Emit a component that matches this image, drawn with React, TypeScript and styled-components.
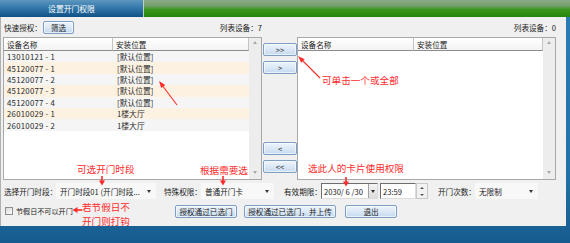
import React from "react";
import styled, { createGlobalStyle } from "styled-components";

const UI_FONT = `"Noto Sans CJK SC", "Noto Sans", sans-serif`;

const GlobalStyle = createGlobalStyle`
  html, body { margin: 0; padding: 0; }
  body { width: 570px; height: 243px; overflow: hidden; font-family: ${UI_FONT}; }
`;

const Screen = styled.div`
  position: relative;
  width: 570px;
  height: 243px;
  background: linear-gradient(#2a7db5 0%, #2272a8 70%, #175c8f 100%);
  font-family: ${UI_FONT};
  font-size: 7.6px;
  color: #222;
  overflow: hidden;
`;

const TitleBar = styled.div`
  display: flex;
  height: 17px;
`;

const Tab = styled.div`
  width: 143px;
  display: flex;
  align-items: center;
  justify-content: center;
  color: #fff;
  font-size: 7.8px;
  background: linear-gradient(#5d97bf 0%, #3479ab 45%, #0f5186 100%);
  border-right: 1px solid #b9d3b5;
`;

const TitleFill = styled.div`
  flex: 1;
  background: linear-gradient(#8cab88 0%, #739e6c 35%, #3c971e 55%, #26850f 100%);
`;

const Window = styled.div`
  width: 566px;
  height: 209px;
  box-sizing: border-box;
  background: #f0f0f0;
  border-left: 1px solid #b0b0b0;
  padding: 0 10px 0 2px;
  display: flex;
  flex-direction: column;
`;

const Main = styled.div`
  display: grid;
  grid-template-columns: 259px 35px 259px;
  grid-template-rows: 20px 143px;
`;

const TopCell = styled.div`
  display: flex;
  align-items: center;
  justify-content: space-between;
  padding: 0 0 0 1px;
`;

const Group = styled.div`
  display: flex;
  align-items: center;
`;

const Label = styled.span<{ $w?: number; $ml?: number; $size?: number }>`
  white-space: nowrap;
  ${(p) => (p.$w ? `width: ${p.$w}px; flex: none;` : "")}
  ${(p) => (p.$ml ? `margin-left: ${p.$ml}px;` : "")}
  ${(p) => (p.$size ? `font-size: ${p.$size}px;` : "")}
`;

const Btn = styled.div<{ $w: number; $ml?: number }>`
  width: ${(p) => p.$w}px;
  height: 13px;
  margin-left: ${(p) => p.$ml ?? 0}px;
  box-sizing: border-box;
  border: 1px solid #7e9ec4;
  border-radius: 2px;
  background: linear-gradient(#edf4fc 0%, #dbe8f6 50%, #c5d9ef 100%);
  box-shadow: inset 0 0 0 1px rgba(255, 255, 255, 0.6);
  display: flex;
  align-items: center;
  justify-content: center;
  white-space: nowrap;
  color: #222;
  flex: none;
`;

const ListBox = styled.div`
  display: grid;
  grid-template-columns: 1fr 12px;
  background: #fff;
  border: 1px solid #a8a8a8;
  min-height: 0;
`;

const ListBody = styled.div`
  display: flex;
  flex-direction: column;
  overflow: hidden;
`;

const HeaderRow = styled.div<{ $first: number }>`
  display: grid;
  grid-template-columns: ${(p) => p.$first}px 1fr;
  height: 13px;
  flex: none;
`;

const HeaderCell = styled.div`
  display: flex;
  align-items: center;
  padding-left: 3px;
  background: linear-gradient(#ffffff, #f3f3f3);
  border-right: 1px solid #c4c4c4;
  border-bottom: 1px solid #8c8c8c;
  box-sizing: border-box;
`;

const Row = styled.div<{ $alt: boolean }>`
  display: grid;
  grid-template-columns: 109px 1fr;
  height: 11.4px;
  flex: none;
  align-items: center;
  background: ${(p) => (p.$alt ? "#fdf2e1" : "#f5f5f5")};
  font-size: 7.8px;
  color: #2a2a2a;
`;

const Cell = styled.span<{ $pl?: number; $ls?: number }>`
  padding-left: ${(p) => p.$pl ?? 3}px;
  letter-spacing: ${(p) => p.$ls ?? 0}px;
  white-space: nowrap;
`;

const ScrollBar = styled.div`
  background: #ededed;
  display: flex;
  flex-direction: column;
  justify-content: space-between;
  align-items: center;
  padding: 3px 0 5px;
`;

const ScrollArrow = styled.span<{ $up: boolean }>`
  width: 0;
  height: 0;
  border-left: 2.5px solid transparent;
  border-right: 2.5px solid transparent;
  ${(p) =>
    p.$up
      ? "border-bottom: 3px solid #a9a9a9;"
      : "border-top: 3px solid #a9a9a9;"}
`;

const MoveColumn = styled.div`
  display: flex;
  flex-direction: column;
  justify-content: space-between;
  padding: 6px 0 7px 1px;
`;

const MoveGroup = styled.div`
  display: flex;
  flex-direction: column;
  gap: 5px;
`;

const ControlRow = styled.div`
  display: flex;
  align-items: center;
  height: 22px;
  padding-left: 1px;
`;

const Combo = styled.div<{ $w: number; $ml?: number }>`
  width: ${(p) => p.$w}px;
  margin-left: ${(p) => p.$ml ?? 0}px;
  height: 16px;
  box-sizing: border-box;
  background: #f8f8f8;
  display: flex;
  align-items: center;
  justify-content: space-between;
  padding: 0 5px 0 4px;
  flex: none;
  white-space: nowrap;
  overflow: hidden;
`;

const Caret = styled.span`
  width: 0;
  height: 0;
  flex: none;
  border-left: 2.5px solid transparent;
  border-right: 2.5px solid transparent;
  border-top: 3px solid #333;
`;

const Sunken = styled.div<{ $w: number; $ml?: number }>`
  width: ${(p) => p.$w}px;
  margin-left: ${(p) => p.$ml ?? 0}px;
  height: 16px;
  box-sizing: border-box;
  background: #fff;
  border-style: solid;
  border-width: 1px;
  border-color: #6e6e6e #dcdcdc #dcdcdc #6e6e6e;
  display: flex;
  align-items: center;
  flex: none;
`;

const FieldText = styled.span`
  flex: 1;
  padding-left: 2px;
  white-space: pre;
`;

const DropButton = styled.div`
  width: 8px;
  align-self: stretch;
  background: linear-gradient(#f4f4f4, #dcdcdc);
  border-left: 1px solid #a0a0a0;
  display: flex;
  align-items: center;
  justify-content: center;
`;

const Spinner = styled.div`
  width: 12px;
  height: 16px;
  box-sizing: border-box;
  border: 1px solid #c8c8c8;
  background: #f2f2f2;
  display: flex;
  flex-direction: column;
  justify-content: space-around;
  align-items: center;
  flex: none;
`;

const SpinArrow = styled.span<{ $up: boolean }>`
  width: 0;
  height: 0;
  border-left: 2px solid transparent;
  border-right: 2px solid transparent;
  ${(p) => (p.$up ? "border-bottom: 2px solid #555;" : "border-top: 2px solid #555;")}
`;

const ActionRow = styled.div`
  display: flex;
  align-items: center;
  height: 18px;
  padding-left: 2px;
`;

const CheckGroup = styled.div`
  width: 170px;
  display: flex;
  align-items: center;
  gap: 3px;
  flex: none;
`;

const CheckBox = styled.span`
  width: 8px;
  height: 8px;
  box-sizing: border-box;
  border: 1px solid #8f8f8f;
  background: linear-gradient(135deg, #dcdcdc, #fafafa);
  flex: none;
`;

const Overlay = styled.div`
  position: absolute;
  inset: 0;
  pointer-events: none;
`;

const Note = styled.div<{ $x: number; $y: number }>`
  position: absolute;
  left: ${(p) => p.$x}px;
  top: ${(p) => p.$y}px;
  height: 12px;
  color: #ff2b2b;
  font-size: 9.6px;
  line-height: 12px;
  white-space: nowrap;
`;

const ArrowLayer = styled.svg`
  position: absolute;
  left: 0;
  top: 0;
`;

type RowData = { name: string; loc: string };

const rows: RowData[] = [
  { name: "13010121 - 1", loc: "[默认位置]" },
  { name: "45120077 - 1", loc: "[默认位置]" },
  { name: "45120077 - 2", loc: "[默认位置]" },
  { name: "45120077 - 3", loc: "[默认位置]" },
  { name: "45120077 - 4", loc: "[默认位置]" },
  { name: "26010029 - 1", loc: "1楼大厅" },
  { name: "26010029 - 2", loc: "1楼大厅" },
];

const DeviceList: React.FC<{ first: number; items: RowData[] }> = ({ first, items }) => (
  <ListBox>
    <ListBody>
      <HeaderRow $first={first}>
        <HeaderCell>设备名称</HeaderCell>
        <HeaderCell>安装位置</HeaderCell>
      </HeaderRow>
      {items.map((r, i) => (
        <Row key={i} $alt={i % 2 === 1}>
          <Cell $pl={3} $ls={0.25}>{r.name}</Cell>
          <Cell $pl={4}>{r.loc}</Cell>
        </Row>
      ))}
    </ListBody>
    <ScrollBar>
      <ScrollArrow $up />
      <ScrollArrow $up={false} />
    </ScrollBar>
  </ListBox>
);

const DownArrow: React.FC<{ x: number; y: number }> = ({ x, y }) => (
  <g fill="#ff2b2b" stroke="none">
    <rect x={x - 0.8} y={y} width={1.6} height={5} />
    <polygon points={`${x - 3},${y + 4.5} ${x + 3},${y + 4.5} ${x},${y + 9.5}`} />
  </g>
);

export default function App() {
  return (
    <Screen>
      <GlobalStyle />
      <TitleBar>
        <Tab>设置开门权限</Tab>
        <TitleFill />
      </TitleBar>
      <Window>
        <Main>
          <TopCell>
            <Group>
              <Label>快速授权：</Label>
              <Btn $w={31} $ml={1}>筛选</Btn>
            </Group>
            <Label>列表设备：7</Label>
          </TopCell>
          <div />
          <TopCell>
            <span />
            <Label>列表设备：0</Label>
          </TopCell>

          <DeviceList first={109} items={rows} />
          <MoveColumn>
            <MoveGroup>
              <Btn $w={34}>&gt;&gt;</Btn>
              <Btn $w={34}>&gt;</Btn>
            </MoveGroup>
            <MoveGroup>
              <Btn $w={34}>&lt;</Btn>
              <Btn $w={34}>&lt;&lt;</Btn>
            </MoveGroup>
          </MoveColumn>
          <DeviceList first={116} items={[]} />
        </Main>

        <ControlRow>
          <Label $w={52}>选择开门时段：</Label>
          <Combo $w={100}>
            <span>开门时段01 (开门时段...</span>
            <Caret />
          </Combo>
          <Label $w={37} $ml={8}>特殊权限：</Label>
          <Combo $w={73}>
            <span>普通开门卡</span>
            <Caret />
          </Combo>
          <Label $w={37} $ml={10}>有效期限：</Label>
          <Sunken $w={57}>
            <FieldText>2030/ 6 /30</FieldText>
            <DropButton>
              <Caret />
            </DropButton>
          </Sunken>
          <Sunken $w={36} $ml={2}>
            <FieldText>23:59</FieldText>
          </Sunken>
          <Spinner>
            <SpinArrow $up />
            <SpinArrow $up={false} />
          </Spinner>
          <Label $w={37} $ml={10}>开门次数：</Label>
          <Combo $w={63}>
            <span>无限制</span>
            <Caret />
          </Combo>
        </ControlRow>

        <ActionRow>
          <CheckGroup>
            <CheckBox />
            <Label $size={7.1}>节假日不可以开门</Label>
          </CheckGroup>
          <Btn $w={62}>授权通过已选门</Btn>
          <Btn $w={92} $ml={7}>授权通过已选门，并上传</Btn>
          <Btn $w={52} $ml={9}>退出</Btn>
        </ActionRow>
      </Window>

      <Overlay>
        <Note $x={322} $y={74}>可单击一个或全部</Note>
        <Note $x={77} $y={163}>可选开门时段</Note>
        <Note $x={200} $y={164}>根据需要选</Note>
        <Note $x={308} $y={162}>选此人的卡片使用权限</Note>
        <Note $x={82} $y={201}>若节假日不</Note>
        <Note $x={82} $y={215}>开门则打钩</Note>
        <ArrowLayer width={570} height={243} viewBox="0 0 570 243">
          <line x1={177} y1={105} x2={162} y2={85} stroke="#ff2b2b" strokeWidth={1.1} />
          <polygon points="159,81 165.2,85.1 161.2,88.1" fill="#ff2b2b" />
          <line x1={320} y1={78} x2={302} y2={60} stroke="#ff2b2b" strokeWidth={1.1} />
          <polygon points="298,56 304.7,59.2 301.2,62.7" fill="#ff2b2b" />
          <DownArrow x={102} y={176} />
          <DownArrow x={223} y={176} />
          <DownArrow x={346} y={177} />
          <g fill="#ff2b2b">
            <rect x={77} y={209.2} width={5} height={1.6} />
            <polygon points="72.5,210 77.5,207 77.5,213" />
          </g>
        </ArrowLayer>
      </Overlay>
    </Screen>
  );
}
